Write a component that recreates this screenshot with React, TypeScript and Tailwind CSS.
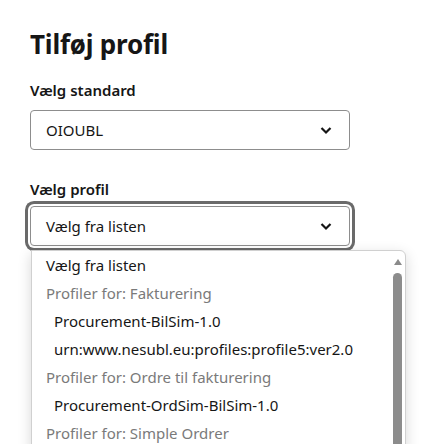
import React from "react";

const font = { fontFamily: '"Noto Sans", "Open Sans", Arial, sans-serif' };

type Row = { text: string; kind: "plain" | "group" | "option" };

const rows: Row[] = [
  { text: "Vælg fra listen", kind: "plain" },
  { text: "Profiler for: Fakturering", kind: "group" },
  { text: "Procurement-BilSim-1.0", kind: "option" },
  { text: "urn:www.nesubl.eu:profiles:profile5:ver2.0", kind: "option" },
  { text: "Profiler for: Ordre til fakturering", kind: "group" },
  { text: "Procurement-OrdSim-BilSim-1.0", kind: "option" },
  { text: "Profiler for: Simple Ordrer", kind: "group" },
];

const Chevron = () => (
  <svg width="14" height="10" viewBox="0 0 14 10" className="text-[#161616]">
    <path d="M2.5 3 L7 7.5 L11.5 3" fill="none" stroke="currentColor" strokeWidth="2.2" />
  </svg>
);

const Select: React.FC<{ value: string; focused?: boolean }> = ({ value, focused }) => (
  <div
    className={`w-[320px] h-[40px] border border-[#8d8d8d] rounded-[4px] bg-white flex items-center justify-between pl-[15px] pr-[16px] ${
      focused ? "ring-[3px] ring-[#6a6a6a] ring-offset-2" : ""
    }`}
  >
    <span className="text-[15px] text-[#161616]">{value}</span>
    <Chevron />
  </div>
);

export default function App() {
  return (
    <div className="w-[443px] h-[444px] bg-white overflow-hidden relative" style={font}>
      <div className="pl-[30px] pt-[28px]">
        <h1 className="text-[26px] leading-[32px] font-bold text-[#161616] tracking-[-0.2px]">Tilføj profil</h1>
        <div className="mt-[20px] text-[15px] leading-[20px] font-semibold text-[#161616]">Vælg standard</div>
        <div className="mt-[10px]">
          <Select value="OIOUBL" />
        </div>
        <div className="mt-[29px] text-[15px] leading-[20px] font-semibold text-[#161616]">Vælg profil</div>
        <div className="mt-[7px] relative">
          <Select value="Vælg fra listen" focused />
          <div className="absolute left-[1px] top-[44px] w-[375px] h-[200px] bg-white border border-[#d0d0d0] rounded-tr-[6px] shadow-[0_4px_14px_rgba(0,0,0,0.16)] flex">
            <div className="flex-1">
              {rows.map((r, i) => (
                <div
                  key={i}
                  className={`h-[28px] flex items-center text-[15px] ${
                    r.kind === "group" ? "pl-[14px] text-[#7a7a7a]" : r.kind === "option" ? "pl-[22px] text-[#161616]" : "pl-[14px] text-[#161616]"
                  }`}
                >
                  {r.text}
                </div>
              ))}
            </div>
            <div className="w-[13px] mr-[1px] flex flex-col items-center pt-[8px]">
              <svg width="8" height="6" viewBox="0 0 8 6">
                <path d="M4 0 L8 6 L0 6 Z" fill="#8a8a8a" />
              </svg>
              <div className="mt-[8px] w-[9px] flex-1 bg-[#8c8c8c] rounded-t-[5px]" />
            </div>
          </div>
        </div>
      </div>
    </div>
  );
}
